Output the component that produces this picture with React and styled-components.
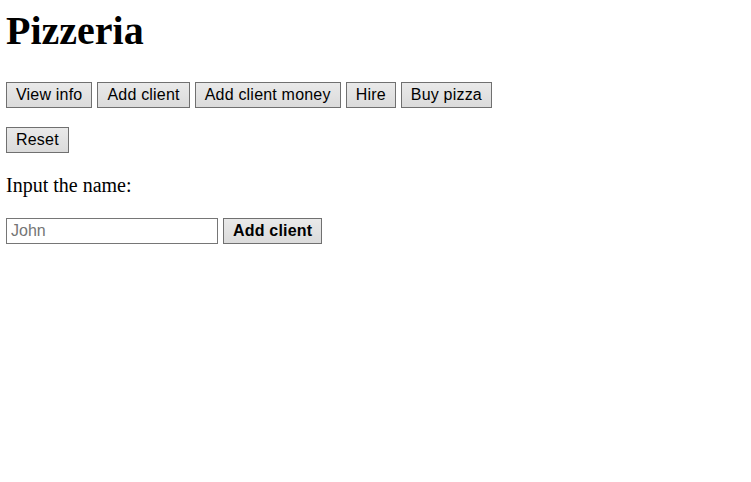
import React, { useState } from "react";
import styled, { createGlobalStyle } from "styled-components";

const GlobalStyle = createGlobalStyle`
  body {
    margin: 0;
    background: #fff;
    color: #000;
    font-family: "Liberation Serif", "Times New Roman", serif;
  }
`;

const Page = styled.div`
  padding: 8px 6px;
  display: flex;
  flex-direction: column;
  align-items: flex-start;
`;

const Title = styled.h1`
  font-size: 40px;
  line-height: 46px;
  font-weight: 700;
  margin: 0 0 28px;
`;

const Row = styled.div`
  display: flex;
  align-items: center;
  gap: 5px;
  margin-bottom: ${(p) => p.$space || 0}px;
`;

const Button = styled.button`
  box-sizing: border-box;
  height: 26px;
  padding: 0 9px;
  border: 1px solid #707070;
  border-radius: 0;
  background: linear-gradient(to bottom, #e9e9e9, #dbdbdb);
  color: #000;
  font-family: "Liberation Sans", Arial, sans-serif;
  font-size: 16px;
  letter-spacing: 0.2px;
  font-weight: ${(p) => (p.$bold ? 700 : 400)};
  cursor: pointer;

  &:hover {
    border-color: #3c7fb1;
    background: linear-gradient(to bottom, #eaf6fd, #bee6fd);
  }
`;

const Label = styled.p`
  font-size: 20px;
  line-height: 23px;
  margin: 0 0 21px;
`;

const NameInput = styled.input`
  box-sizing: border-box;
  width: 212px;
  height: 26px;
  padding: 0 4px;
  border: 1px solid #767676;
  border-radius: 0;
  font-family: "Liberation Sans", Arial, sans-serif;
  font-size: 16px;
  color: #000;
  outline: none;

  &::placeholder {
    color: #757575;
  }
`;

const actions = ["View info", "Add client", "Add client money", "Hire", "Buy pizza"];

export default function App() {
  const [name, setName] = useState("");

  return (
    <>
      <GlobalStyle />
      <Page>
        <Title>Pizzeria</Title>
        <Row $space={19}>
          {actions.map((a) => (
            <Button key={a}>{a}</Button>
          ))}
        </Row>
        <Row $space={21}>
          <Button>Reset</Button>
        </Row>
        <Label>Input the name:</Label>
        <Row>
          <NameInput
            placeholder="John"
            value={name}
            onChange={(e) => setName(e.target.value)}
          />
          <Button $bold>Add client</Button>
        </Row>
      </Page>
    </>
  );
}
